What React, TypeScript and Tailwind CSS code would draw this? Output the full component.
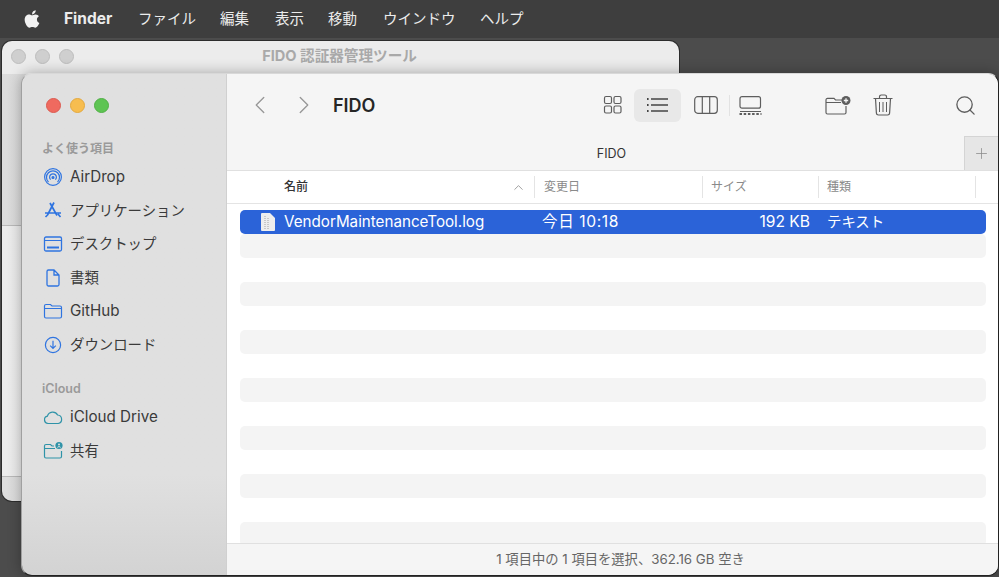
import React from 'react';
import { FaApple } from 'react-icons/fa';
import { ChevronLeft, ChevronRight, ChevronUp, Plus, Search } from 'lucide-react';

const font = { fontFamily: 'Inter, "Noto Sans CJK JP", sans-serif' };

function Icon({ children, w = 20, h = 20, className = '' }: { children: React.ReactNode; w?: number; h?: number; className?: string }) {
  return (
    <svg width={w} height={h} viewBox={`0 0 ${w} ${h}`} fill="none" stroke="currentColor" strokeWidth="1.2" className={className}>
      {children}
    </svg>
  );
}

const folderPath = 'M1.5 5.5v10a1.5 1.5 0 0 0 1.5 1.5h14a1.5 1.5 0 0 0 1.5-1.5V6.5A1.5 1.5 0 0 0 17 5H9L7.5 3.5H3A1.5 1.5 0 0 0 1.5 5v2.5h17';

const favorites = [
  {
    label: 'AirDrop',
    latin: true,
    icon: (
      <Icon>
        <circle cx="10" cy="10" r="8.4" />
        <path d="M5.5 15a6.5 6.5 0 1 1 9 0" />
        <path d="M7.6 12.6a3.4 3.4 0 1 1 4.8 0" />
        <circle cx="10" cy="10.5" r="1" fill="currentColor" />
      </Icon>
    ),
  },
  {
    label: 'アプリケーション',
    icon: (
      <Icon>
        <path d="M11 2.5 4.5 15M7 3l7 12.5M2 13h16M2.5 17l2-2M17.5 17l-2.5-3" strokeWidth="1.7" />
      </Icon>
    ),
  },
  {
    label: 'デスクトップ',
    icon: (
      <Icon>
        <rect x="1.5" y="3" width="17" height="14" rx="1.5" strokeWidth="1.3" />
        <path d="M1.5 6.5h17" strokeWidth="1" />
        <path d="M4 13.5h12" strokeWidth="2.2" />
      </Icon>
    ),
  },
  {
    label: '書類',
    icon: (
      <Icon>
        <path d="M4 3.5A1.5 1.5 0 0 1 5.5 2h5.5L16 7v9.5a1.5 1.5 0 0 1-1.5 1.5h-9A1.5 1.5 0 0 1 4 16.5zM11 2v5h5" strokeWidth="1.3" />
      </Icon>
    ),
  },
  {
    label: 'GitHub',
    latin: true,
    icon: (
      <Icon>
        <path d={folderPath} strokeWidth="1.2" />
      </Icon>
    ),
  },
  {
    label: 'ダウンロード',
    icon: (
      <Icon>
        <circle cx="10" cy="10" r="7.6" />
        <path d="M10 5.8v7.4M7.2 10.6 10 13.4l2.8-2.8" />
      </Icon>
    ),
  },
];

function SidebarRow({ label, icon, color, latin }: { label: string; icon: React.ReactNode; color: string; latin?: boolean }) {
  return (
    <div className="flex items-center h-[33.6px]">
      <span className={`w-5 h-5 ml-[21px] mr-[7px] flex items-center justify-center ${color}`}>{icon}</span>
      <span className={`${latin ? 'text-[15.2px] pt-[1px]' : 'text-[14.4px]'} text-[#3a3a3a]`}>{label}</span>
    </div>
  );
}

function TrafficLight({ color }: { color: string }) {
  return <span className={`w-[15px] h-[15px] rounded-full ${color}`} />;
}

export default function App() {
  const stripes = Array.from({ length: 13 }, (_, i) => i);

  return (
    <div style={font} className="relative w-[999px] h-[577px] overflow-hidden bg-[#4c4c4c]">
      {/* menu bar */}
      <div className="flex items-center h-[38px] bg-[#3e3e3e] text-[#ececec] text-[14.5px]">
        <FaApple className="ml-[22px] mr-[22px] text-[#f2f2f2]" size={20} />
        <span className="font-bold text-[15.5px] w-[74px]">Finder</span>
        <span className="w-[82px]">ファイル</span>
        <span className="w-[55px]">編集</span>
        <span className="w-[53px]">表示</span>
        <span className="w-[55px]">移動</span>
        <span className="w-[97px]">ウインドウ</span>
        <span>ヘルプ</span>
      </div>

      {/* back window */}
      <div className="absolute left-[2px] top-[41px] w-[677px] h-[460px] flex flex-col rounded-[10px] overflow-hidden shadow-[0_0_0_1px_#2c2c2c]">
        <div className="relative flex items-center justify-center h-[33px] shrink-0 bg-[#ececec]">
          <div className="absolute left-[9px] top-[8px] flex gap-[9px]">
            <TrafficLight color="bg-[#cfcfcf] border border-[#bdbdbd]" />
            <TrafficLight color="bg-[#cfcfcf] border border-[#bdbdbd]" />
            <TrafficLight color="bg-[#cfcfcf] border border-[#bdbdbd]" />
          </div>
          <span className="text-[14.6px] font-bold text-[#a9a9a9] -translate-y-px -translate-x-px">FIDO 認証器管理ツール</span>
        </div>
        <div className="h-[152px] shrink-0 border-b border-[#b9b9b9] bg-linear-to-r from-[#dcdcdc] to-[#c4c4c4]" />
        <div className="flex-1 bg-linear-to-r from-[#ececec] to-[#dedede]" />
        <div className="h-[25px] shrink-0 border-t border-[#b9b9b9] bg-linear-to-r from-[#dddddd] to-[#c8c8c8]" />
      </div>

      {/* finder window */}
      <div className="absolute left-[21px] top-[73px] w-[978px] h-[503px] flex rounded-[11px] overflow-hidden border border-[#222222] border-t-[#d8d8d8] border-l-[#a0a0a0] shadow-[0_0_14px_rgba(0,0,0,0.3)]">
        <aside className="w-[205px] shrink-0 flex flex-col bg-linear-to-b from-[#e0e0e0] from-[80%] to-[#d3d3d3] border-r border-[#d0d0d0]">
          <div className="flex gap-[9px] ml-[24px] mt-[24px]">
            <TrafficLight color="bg-[#ef6a5f] border border-[#dc5a50]" />
            <TrafficLight color="bg-[#f7bd4f] border border-[#e3a93f]" />
            <TrafficLight color="bg-[#5ec453] border border-[#50b045]" />
          </div>
          <div className="ml-[20px] mt-[28px] mb-[3px] text-[12px] font-semibold text-[#9a9a9a] leading-[16px]">よく使う項目</div>
          {favorites.map((f) => (
            <SidebarRow key={f.label} label={f.label} latin={f.latin} icon={f.icon} color="text-[#2f74e0]" />
          ))}
          <div className="ml-[20px] mt-[19px] mb-[4px] text-[12.5px] font-semibold text-[#9a9a9a] leading-[16px]">iCloud</div>
          <SidebarRow
            label="iCloud Drive"
            latin
            color="text-[#2f93a8]"
            icon={
              <Icon>
                <path d="M5 16.5a3.7 3.7 0 0 1-.6-7.3A5.5 5.5 0 0 1 14.6 8a4.3 4.3 0 0 1 .6 8.5z" />
              </Icon>
            }
          />
          <SidebarRow
            label="共有"
            color="text-[#2f93a8]"
            icon={
              <Icon>
                <path d="M11 5H9L7.5 3.5H3A1.5 1.5 0 0 0 1.5 5v10.5A1.5 1.5 0 0 0 3 17h14a1.5 1.5 0 0 0 1.5-1.5V10M1.5 7.5H12" />
                <circle cx="16" cy="4.5" r="3.6" fill="currentColor" stroke="none" />
                <circle cx="16" cy="3.6" r="1" fill="#e0e0e0" stroke="none" />
                <path d="M14.4 6.4c.4-1 2.8-1 3.2 0" stroke="#e0e0e0" strokeWidth="1" />
              </Icon>
            }
          />
        </aside>

        <main className="flex-1 min-w-0 flex flex-col bg-white">
          {/* toolbar */}
          <div className="flex items-center h-[62px] shrink-0 bg-[#f5f5f5] text-[#5e5e5e]">
            <ChevronLeft size={30} strokeWidth={1.1} className="ml-[18px] text-[#9a9a9a]" />
            <ChevronRight size={30} strokeWidth={1.1} className="ml-[14px] text-[#9a9a9a]" />
            <span className="ml-[14px] text-[18px] font-semibold text-[#262626]">FIDO</span>

            <div className="ml-auto flex items-center">
              <svg width="20" height="20" viewBox="0 0 20 20" fill="none" stroke="currentColor" strokeWidth="1.2" className="mr-[11px]">
                <rect x="1.5" y="1.5" width="7" height="7" rx="1.5" />
                <rect x="11" y="1.5" width="7" height="7" rx="1.5" />
                <rect x="1.5" y="11" width="7" height="7" rx="1.5" />
                <rect x="11" y="11" width="7" height="7" rx="1.5" />
              </svg>
              <div className="w-[47px] h-[33px] rounded-[6px] bg-[#e8e8e8] flex items-center justify-center">
                <svg width="22" height="16" viewBox="0 0 22 16" fill="none" stroke="#444444" strokeWidth="1.3">
                  <path d="M4 2h17M4 8h17M4 14h17" />
                  <path d="M0 2h1.6M0 8h1.6M0 14h1.6" strokeWidth="1.8" />
                </svg>
              </div>
              <svg width="24" height="18" viewBox="0 0 24 18" fill="none" stroke="currentColor" strokeWidth="1.2" className="ml-[13px]">
                <rect x="0.7" y="0.7" width="22.6" height="16.6" rx="3" />
                <path d="M8.3 1v16M15.7 1v16" />
              </svg>
              <div className="w-px h-[21px] bg-[#e2e2e2] ml-[11px] mr-[9px]" />
              <svg width="23" height="19" viewBox="0 0 23 19" fill="none" stroke="currentColor" strokeWidth="1.2" className="mr-[63px]">
                <rect x="1" y="0.7" width="20.5" height="11.5" rx="2" />
                <path d="M1 15.5h21" />
                <path d="M0.5 18h22" strokeWidth="2" strokeDasharray="2.5 1.7" />
              </svg>
              <svg width="26" height="19" viewBox="0 0 26 19" fill="none" stroke="currentColor" strokeWidth="1.2">
                <path d="M17 4h-6.5L9 2.4H2.5A1.5 1.5 0 0 0 1 4v12.5A1.5 1.5 0 0 0 2.5 18h17a1.5 1.5 0 0 0 1.5-1.5V10M1 6.5h15" />
                <circle cx="21" cy="4.5" r="4.5" fill="currentColor" stroke="none" />
                <path d="M21 2.3v4.4M18.8 4.5h4.4" stroke="#f5f5f5" strokeWidth="1.3" />
              </svg>
              <svg width="20" height="22" viewBox="0 0 20 22" fill="none" stroke="currentColor" strokeWidth="1.2" className="ml-[22px]">
                <path d="M0.5 4.5h19M6.5 4.5V2.7A1.7 1.7 0 0 1 8.2 1h3.6a1.7 1.7 0 0 1 1.7 1.7v1.8" />
                <path d="M2.5 4.5l.9 14.6A2 2 0 0 0 5.4 21h9.2a2 2 0 0 0 2-1.9l.9-14.6" />
                <path d="M6.5 8v10M10 8v10M13.5 8v10" strokeWidth="1" />
              </svg>
              <Search size={23} strokeWidth={1.4} className="ml-[61px] mr-[21px]" />
            </div>
          </div>

          {/* path tab */}
          <div className="flex h-[35px] shrink-0 bg-[#f5f5f5] border-b border-[#e0e0e0]">
            <div className="w-[34px]" />
            <div className="flex-1 flex items-center justify-center text-[12.5px] text-[#333333] pt-[2px] pr-[2px]">FIDO</div>
            <div className="w-[34px] flex items-center justify-center bg-[#e6e6e6] border-l border-t border-[#d4d4d4] text-[#8a8a8a]">
              <Plus size={17} strokeWidth={1.1} />
            </div>
          </div>

          {/* column headers */}
          <div className="flex items-center h-[33px] shrink-0 border-b border-[#e4e4e4] text-[12px] text-[#8a8a8a]">
            <div className="w-[308px] h-[22px] flex items-center justify-between border-r border-[#e4e4e4] pl-[57px] pr-[8px]">
              <span className="text-[#333333] font-medium">名前</span>
              <ChevronUp size={15} strokeWidth={1.3} />
            </div>
            <div className="w-[168px] h-[22px] flex items-center border-r border-[#e4e4e4] pl-[9px]">変更日</div>
            <div className="w-[116px] h-[22px] flex items-center border-r border-[#e4e4e4] pl-[8px]">サイズ</div>
            <div className="w-[157px] h-[22px] flex items-center border-r border-[#e4e4e4] pl-[8px]">種類</div>
          </div>

          {/* rows */}
          <div className="flex-1 min-h-0 overflow-hidden pt-[6px] pl-[13px] pr-[12px]">
            <div className="flex items-center h-[24px] rounded-[5px] bg-[#2b63d8] text-white text-[15.2px]">
              <svg width="16" height="20" viewBox="0 0 16 20" className="ml-[20px] mr-[8px]">
                <path d="M1 2a1 1 0 0 1 1-1h8l5 5v12a1 1 0 0 1-1 1H2a1 1 0 0 1-1-1z" fill="#eeeeee" />
                <path d="M5 4v13M8 6v11" stroke="#bdbdbd" strokeWidth="1.5" strokeDasharray="1 1" />
              </svg>
              <span className="w-[258px]">VendorMaintenanceTool.log</span>
              <span className="w-[143px] text-[15.6px] tracking-[0.6px]">今日 10:18</span>
              <span className="w-[125px] text-right text-[15.6px]">192 KB</span>
              <span className="ml-[17px] text-[14.4px]">テキスト</span>
            </div>
            {stripes.map((i) => (
              <div key={i} className={`h-[24px] rounded-[5px] ${i % 2 === 0 ? 'bg-[#f4f4f4]' : 'bg-white'}`} />
            ))}
          </div>

          {/* status bar */}
          <div className="flex items-center justify-center h-[32px] shrink-0 bg-[#f5f5f5] border-t border-[#e0e0e0] text-[13.3px] text-[#666666] pl-[16px]">
            1 項目中の 1 項目を選択、362.16 GB 空き
          </div>
        </main>
      </div>
    </div>
  );
}
